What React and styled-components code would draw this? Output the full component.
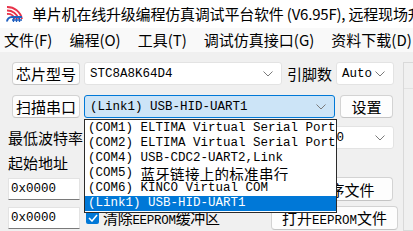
import React from "react";
import styled, { createGlobalStyle } from "styled-components";

const GlobalStyle = createGlobalStyle`
  html, body { margin: 0; padding: 0; background: #f0f0f0; overflow: hidden; }
  * { box-sizing: border-box; }
`;

const CJK = `"Noto Sans CJK SC", "Noto Sans", sans-serif`;
const MONO = `"Liberation Mono", "Noto Sans CJK SC", monospace`;

const Window = styled.div`
  width: 413px;
  height: 231px;
  display: flex;
  flex-direction: column;
  background: #f0f0f0;
  position: relative;
  overflow: hidden;
  font-family: ${CJK};
  color: #000;
`;

const TitleBar = styled.div`
  height: 28px;
  flex: none;
  background: #ffffff;
  display: flex;
  align-items: center;
  padding-left: 6px;
  gap: 9px;
  overflow: hidden;
`;

const LogoBox = styled.div`
  flex: none;
  width: 17px;
  height: 16px;
  display: flex;
`;

const TitleText = styled.span`
  font-size: 15px;
  line-height: 28px;
  white-space: nowrap;
  letter-spacing: -0.2px;
  flex: none;
`;

const MenuBar = styled.div`
  height: 24px;
  flex: none;
  background: #f9f9f9;
  display: flex;
  align-items: center;
  padding-left: 4px;
  gap: 17px;
`;

const MenuItem = styled.span`
  font-size: 15px;
  white-space: nowrap;
  line-height: 24px;
  flex: none;
`;

const Body = styled.div`
  flex: 1;
  display: flex;
  position: relative;
`;

const Main = styled.div`
  width: 398px;
  padding-left: 8px;
  display: flex;
  flex-direction: column;
`;

const Row = styled.div`
  display: flex;
  align-items: center;
  height: ${(p) => p.$h || 23}px;
  margin-top: ${(p) => p.$mt || 0}px;
  gap: ${(p) => p.$gap ?? 4}px;
`;

const Button = styled.div`
  width: ${(p) => p.$w}px;
  height: ${(p) => p.$h || 23}px;
  margin-left: ${(p) => p.$ml || 0}px;
  background: #fdfdfd;
  border: 1px solid #d3d3d3;
  border-bottom-color: #c4c4c4;
  border-radius: 4px;
  display: flex;
  align-items: center;
  justify-content: center;
  font-size: 15px;
  white-space: nowrap;
  flex: none;
`;

const Mono = styled.span`
  font-family: ${MONO};
  font-size: 12.5px;
`;

const Label = styled.span`
  width: ${(p) => p.$w}px;
  margin-left: ${(p) => p.$ml || 0}px;
  font-size: 15px;
  white-space: nowrap;
  flex: none;
`;

const Combo = styled.div`
  width: ${(p) => p.$w}px;
  height: 23px;
  margin-left: ${(p) => p.$ml || 0}px;
  background: ${(p) => (p.$focus ? "#cce4f7" : "#ffffff")};
  border: 1px solid ${(p) => (p.$focus ? "#0078d7" : "#e3e3e3")};
  border-radius: 3px;
  display: flex;
  align-items: center;
  padding: 0 8px 0 5px;
  font-family: ${MONO};
  font-size: 12.5px;
  white-space: nowrap;
  flex: none;
  overflow: hidden;
`;

const ComboText = styled.span`
  flex: 1;
`;

const Input = styled.div`
  width: 72px;
  height: 22px;
  background: #ffffff;
  border: 1px solid #e3e3e3;
  border-bottom-color: #7a7a7a;
  display: flex;
  align-items: center;
  padding-left: 2px;
  font-family: ${MONO};
  font-size: 12.5px;
  flex: none;
`;

const Check = styled.div`
  width: 13px;
  height: 13px;
  margin-left: 2px;
  background: #0078d7;
  border-radius: 2px;
  display: flex;
  align-items: center;
  justify-content: center;
  flex: none;
`;

const CheckLabel = styled.span`
  font-size: 15px;
  white-space: nowrap;
  flex: 1;
  letter-spacing: -0.3px;
`;

const RightPanel = styled.div`
  margin-top: 10px;
  margin-left: 5px;
  flex: 1;
  border: 1px solid #d9d9d9;
  border-right: none;
  display: flex;
  flex-direction: column;
`;

const PanelRow = styled.div`
  height: 26px;
  border-bottom: 1px solid #e2e2e2;
`;

const DropList = styled.div`
  position: absolute;
  left: 84px;
  top: 67px;
  width: 253px;
  height: 94px;
  background: #ffffff;
  border: 1px solid #2b2b2b;
  padding-top: 1px;
  display: flex;
  flex-direction: column;
  z-index: 5;
`;

const DropItem = styled.div`
  height: 15px;
  line-height: 15px;
  padding-left: 3px;
  font-family: ${MONO};
  font-size: 12.5px;
  white-space: nowrap;
  overflow: hidden;
  flex: none;
  background: ${(p) => (p.$sel ? "#0078d7" : "transparent")};
  color: ${(p) => (p.$sel ? "#ffffff" : "#000000")};
`;

const Han = styled.span`
  display: inline-block;
  height: 15px;
  line-height: 15px;
  vertical-align: top;
  font-family: ${CJK};
  font-size: 14.5px;
  letter-spacing: 0.3px;
`;

const Chevron = () => (
  <svg width="10" height="6" viewBox="0 0 10 6" style={{ flex: "none" }}>
    <path d="M0.5 0.5 L5 5 L9.5 0.5" fill="none" stroke="#7a7a7a" strokeWidth="1" />
  </svg>
);

const Logo = () => (
  <svg width="17" height="16" viewBox="0 0 17 16">
    <path d="M1 1 A15 15 0 0 1 16 13" fill="none" stroke="#e8334a" strokeWidth="1.8" />
    <path d="M1 4.5 A11.5 11.5 0 0 1 12.5 13" fill="none" stroke="#e8334a" strokeWidth="1.8" />
    <path d="M1 8 A8 8 0 0 1 9 13" fill="none" stroke="#e8334a" strokeWidth="1.8" />
    <path d="M1 15.5 A5 5 0 0 1 6 11 L16 11" fill="none" stroke="#1f5fbf" strokeWidth="2" />
    <path d="M7.5 11 V16 M10.5 11 V16 M13.5 11 V16 M6 14 H16" fill="none" stroke="#1f5fbf" strokeWidth="1.3" />
  </svg>
);

const CheckMark = () => (
  <svg width="10" height="8" viewBox="0 0 10 8">
    <path d="M1 4 L4 7 L9 1" fill="none" stroke="#ffffff" strokeWidth="1.5" />
  </svg>
);

const ports = [
  { t: "(COM1) ELTIMA Virtual Serial Port" },
  { t: "(COM2) ELTIMA Virtual Serial Port" },
  { t: "(COM4) USB-CDC2-UART2,Link" },
  { t: "(COM5) ", han: "蓝牙链接上的标准串行" },
  { t: "(COM6) KINCO Virtual COM" },
  { t: "(Link1) USB-HID-UART1", sel: true },
];

export default function App() {
  return (
    <>
      <GlobalStyle />
      <Window>
        <TitleBar>
          <LogoBox><Logo /></LogoBox>
          <TitleText>单片机在线升级编程仿真调试平台软件 (V6.95F), 远程现场升级</TitleText>
        </TitleBar>
        <MenuBar>
          <MenuItem>文件(F)</MenuItem>
          <MenuItem>编程(O)</MenuItem>
          <MenuItem>工具(T)</MenuItem>
          <MenuItem>调试仿真接口(G)</MenuItem>
          <MenuItem>资料下载(D)</MenuItem>
        </MenuBar>
        <Body>
          <Main>
            <Row $mt={10}>
              <Button $w={68} $ml={4}>芯片型号</Button>
              <Combo $w={198}>
                <ComboText>STC8A8K64D4</ComboText>
                <Chevron />
              </Combo>
              <Label $w={47} $ml={1}>引脚数</Label>
              <Combo $w={58} $ml={-2}>
                <ComboText>Auto</ComboText>
                <Chevron />
              </Combo>
            </Row>
            <Row $mt={10}>
              <Button $w={68} $ml={4}>扫描串口</Button>
              <Combo $w={251} $focus>
                <ComboText>(Link1) USB-HID-UART1</ComboText>
                <Chevron />
              </Combo>
              <Button $w={53} $ml={1}>设置</Button>
            </Row>
            <Row $mt={8}>
              <Label $w={76}>最低波特率</Label>
              <Combo $w={120}>
                <ComboText>2400</ComboText>
                <Chevron />
              </Combo>
              <Label $w={84} $ml={3}>最高波特率</Label>
              <Combo $w={101} $ml={-10}>
                <ComboText>115200</ComboText>
                <Chevron />
              </Combo>
            </Row>
            <Row $mt={3} $h={20}>
              <Label $w={76}>起始地址</Label>
            </Row>
            <Row $mt={6} $h={22}>
              <Input>0x0000</Input>
              <Button $w={127} $h={24} $ml={182}>打开程序文件</Button>
            </Row>
            <Row $mt={6} $h={23}>
              <Input>0x0000</Input>
              <Check><CheckMark /></Check>
              <CheckLabel>清除<Mono>EEPROM</Mono>缓冲区</CheckLabel>
              <Button $w={127} $h={24}>
                <span>打开<Mono>EEPROM</Mono>文件</span>
              </Button>
            </Row>
          </Main>
          <RightPanel>
            <PanelRow />
          </RightPanel>
          <DropList>
            {ports.map((p, i) => (
              <DropItem key={i} $sel={p.sel}>
                {p.t}
                {p.han && <Han>{p.han}</Han>}
              </DropItem>
            ))}
          </DropList>
        </Body>
      </Window>
    </>
  );
}
